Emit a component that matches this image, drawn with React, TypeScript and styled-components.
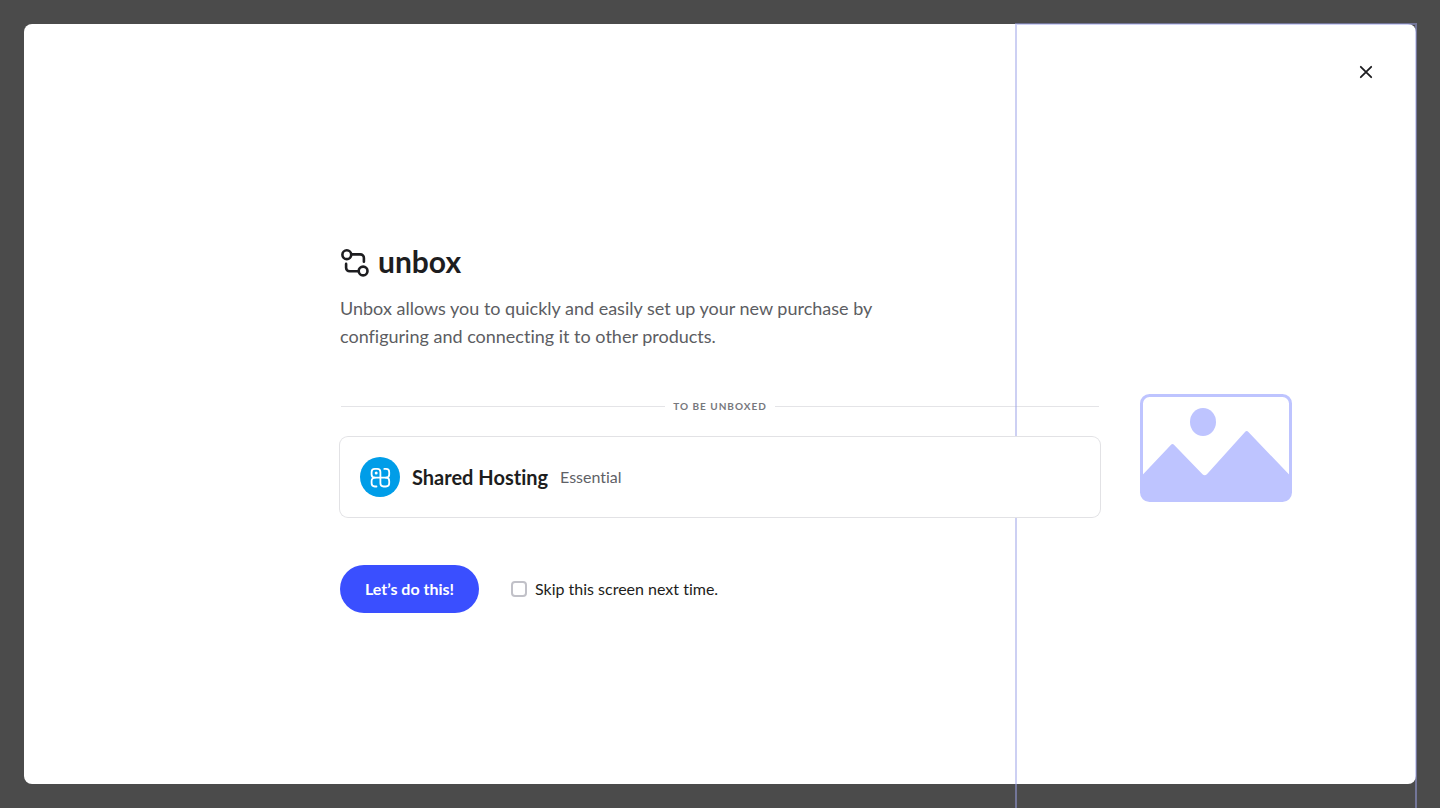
import styled, { createGlobalStyle } from 'styled-components';

const GlobalStyle = createGlobalStyle`
  *, *::before, *::after { box-sizing: border-box; }
  body {
    margin: 0;
    font-family: Lato, 'Liberation Sans', sans-serif;
    font-variant-ligatures: none;
    color: #1d1d20;
  }
`;

const Backdrop = styled.div`
  display: flex;
  min-height: 100vh;
  padding: 24px;
  overflow: hidden;
  background: #4b4b4b;
`;

const Modal = styled.main`
  position: relative;
  flex: 1;
  display: flex;
  align-items: center;
  justify-content: center;
  padding-top: 54px;
  border-radius: 8px;
  background: #fff;
`;

const CloseButton = styled.button`
  position: absolute;
  top: 36px;
  right: 38px;
  z-index: 2;
  display: grid;
  place-items: center;
  width: 24px;
  height: 24px;
  padding: 0;
  border: 0;
  background: none;
  color: inherit;
  cursor: pointer;
`;

const IllustrationPanel = styled.aside`
  position: absolute;
  top: -1px;
  right: -1px;
  bottom: -89px;
  display: flex;
  align-items: center;
  justify-content: center;
  width: 402px;
  border: 2px solid rgba(156, 162, 232, 0.5);
`;

const Content = styled.div`
  width: 100%;
  max-width: 760px;
`;

const Brand = styled.h1`
  display: flex;
  align-items: flex-start;
  gap: 8px;
  height: 28px;
  margin: 0 0 17px;
  font-size: 30px;
  font-weight: 700;
  line-height: 24px;
`;

const Intro = styled.p`
  max-width: 560px;
  margin: 0 0 48px;
  font-size: 18px;
  line-height: 28px;
  color: #5c5d62;
`;

const SectionLabel = styled.h2`
  display: flex;
  align-items: center;
  gap: 8px;
  margin: 0 0 23px;
  padding: 0 1px;
  font-size: 10px;
  font-weight: 700;
  line-height: 16px;
  letter-spacing: 1px;
  text-transform: uppercase;
  color: #77787d;

  &::before,
  &::after {
    content: '';
    flex: 1;
    height: 1px;
    background: #e4e4e7;
  }
`;

const ProductCard = styled.section`
  position: relative;
  z-index: 1;
  display: flex;
  align-items: center;
  gap: 12px;
  margin-bottom: 48px;
  padding: 20px;
  border-radius: 8px;
  background: #fff;
  box-shadow: 0 0 0 1px #e2e2e5;
`;

const ProductIcon = styled.svg`
  flex: none;
  width: 40px;
  height: 40px;
`;

const ProductText = styled.div`
  display: flex;
  align-items: center;
  gap: 12px;
  line-height: 24px;
`;

const ProductName = styled.h3`
  margin: 0;
  font-size: 20px;
  font-weight: 700;
`;

const ProductPlan = styled.span`
  font-size: 16px;
  color: #606166;
`;

const Actions = styled.div`
  display: flex;
  align-items: center;
  gap: 32px;
`;

const PrimaryButton = styled.button`
  min-width: 139px;
  height: 48px;
  padding: 0 24px 2px;
  border: 0;
  border-radius: 24px;
  background: #3a4fff;
  color: #fff;
  font: inherit;
  font-size: 16px;
  font-weight: 700;
  cursor: pointer;
`;

const SkipOption = styled.label`
  display: flex;
  align-items: center;
  gap: 8px;
  font-size: 16px;
  line-height: 24px;
`;

const Checkbox = styled.input`
  appearance: none;
  width: 16px;
  height: 16px;
  margin: 0;
  border: 2px solid #c1c1c8;
  border-radius: 4px;
  background: #fff;

  &:checked {
    border-color: #3a4fff;
    background: #3a4fff;
  }
`;

const BrandMark = () => (
  <svg width="30" height="28" viewBox="0 0 30 28" fill="none" stroke="currentColor" strokeWidth="2.6" strokeLinecap="round" aria-hidden="true">
    <circle cx="6.8" cy="5.7" r="4.4" />
    <circle cx="23.1" cy="22" r="4.4" />
    <path d="M11.8 5.4H20.3a3.6 3.6 0 0 1 3.6 3.6v3.8" />
    <path d="M18 22.3H9.7A3.6 3.6 0 0 1 6.1 18.7v-3.8" />
  </svg>
);

const HostingMark = () => (
  <ProductIcon viewBox="0 0 40 40" fill="none" aria-hidden="true">
    <circle cx="20" cy="20" r="20" fill="#009de8" />
    <g stroke="#fff" strokeWidth="1.8" strokeLinecap="round" strokeLinejoin="round">
      <path d="M20.4 20.7H14.8a3.2 3.2 0 0 1-3.2-3.2V15.1a3.2 3.2 0 0 1 3.2-3.2h2.4a3.2 3.2 0 0 1 3.2 3.2v11.2a3.2 3.2 0 0 0 3.2 3.2h2.4a3.2 3.2 0 0 0 3.2-3.2V23.9a3.2 3.2 0 0 0-3.2-3.2H20.4" />
      <path d="M24.3 11.9H26a3.2 3.2 0 0 1 3.2 3.2v2.4a3.2 3.2 0 0 1-3.2 3.2" />
      <path d="M14.8 20.7a3.2 3.2 0 0 0-3.2 3.2v2.4a3.2 3.2 0 0 0 3.2 3.2h1.7" />
    </g>
    <circle cx="16.2" cy="16.1" r="1.5" fill="#fff" />
  </ProductIcon>
);

const PicturePlaceholder = () => (
  <svg width="152" height="108" viewBox="0 0 152 108" fill="#bec4ff" role="img" aria-label="Illustration">
    <rect x="1.5" y="1.5" width="149" height="105" rx="8" fill="none" stroke="#bec4ff" strokeWidth="3" />
    <ellipse cx="63" cy="28" rx="13" ry="14" />
    <path d="M1 82.5L30.8 51Q32.5 49.2 34.2 51L62.5 80.2Q64.7 82.2 66.9 80.2L105 38Q106.7 36.2 108.4 38L151 82.5V98a9 9 0 0 1-9 9H10a9 9 0 0 1-9-9Z" />
  </svg>
);

export default function App() {
  return (
    <>
      <GlobalStyle />
      <Backdrop>
        <Modal>
          <IllustrationPanel>
            <PicturePlaceholder />
          </IllustrationPanel>
          <CloseButton type="button" aria-label="Close">
            <svg width="14" height="14" viewBox="0 0 14 14" stroke="currentColor" strokeWidth="1.8" strokeLinecap="round" aria-hidden="true">
              <path d="M1.8 1.8L12.2 12.2M12.2 1.8L1.8 12.2" />
            </svg>
          </CloseButton>
          <Content>
            <Brand>
              <BrandMark />
              unbox
            </Brand>
            <Intro>
              Unbox allows you to quickly and easily set up your new purchase by configuring and
              connecting it to other products.
            </Intro>
            <SectionLabel>To be unboxed</SectionLabel>
            <ProductCard>
              <HostingMark />
              <ProductText>
                <ProductName>Shared Hosting</ProductName>
                <ProductPlan>Essential</ProductPlan>
              </ProductText>
            </ProductCard>
            <Actions>
              <PrimaryButton type="button">Let’s do this!</PrimaryButton>
              <SkipOption htmlFor="skip-screen">
                <Checkbox id="skip-screen" type="checkbox" />
                Skip this screen next time.
              </SkipOption>
            </Actions>
          </Content>
        </Modal>
      </Backdrop>
    </>
  );
}
